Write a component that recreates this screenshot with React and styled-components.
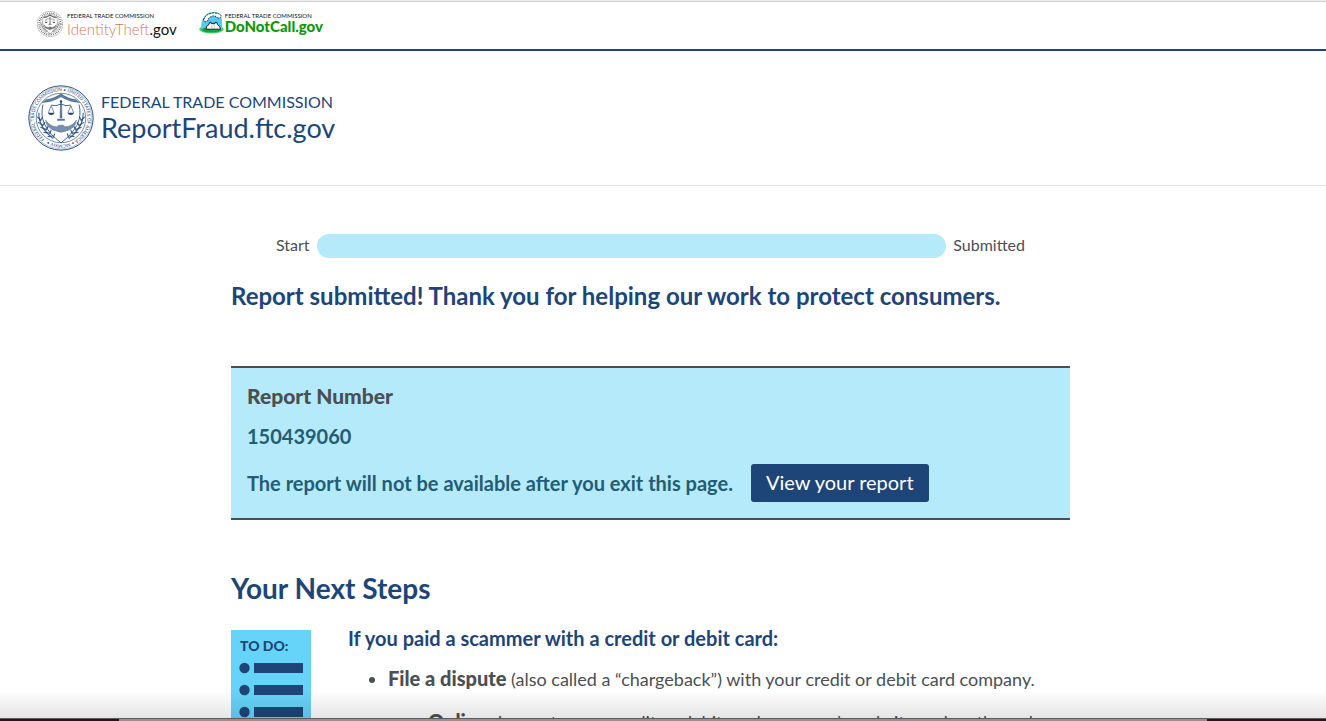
import React from 'react';
import styled, { createGlobalStyle } from 'styled-components';

const NAVY = '#1e4578';
const TEXT = '#4b4f54';
const SKY = '#b4eafa';

const GlobalStyle = createGlobalStyle`
* {
    box-sizing: border-box;
}

body {
    margin: 0;
    background: #fff;
    color: ${TEXT};
    font-family: Lato, "Liberation Sans", sans-serif;
}

h1, h2, h3, p, ul {
    margin: 0;
    padding: 0;
}

a {
    color: inherit;
    text-decoration: none;
}
`

function FtcSeal({size, color, detailed}) {
    return (
        <svg width={size} height={size} viewBox="0 0 64 64" fill="none" stroke={color} aria-hidden="true">
            <circle cx="32" cy="32" r="31.2" strokeWidth="0.9" strokeDasharray={detailed ? 'none' : '5 2'} />
            {detailed ? (
                <>
                    <circle cx="32" cy="32" r="30" strokeWidth="0.3" />
                    <path id="sealRing" d="M16.1 52.3 A25.8 25.8 0 1 1 16.5 52.6" stroke="none" />
                    <text fill={color} stroke="none" fontSize="4.5">
                        <textPath href="#sealRing">FEDERAL TRADE COMMISSION • UNITED STATES OF AMERICA • MCMXIV •</textPath>
                    </text>
                </>
            ) : (
                <circle cx="32" cy="32" r="27" strokeWidth="3" strokeDasharray="1.6 3" />
            )}
            <circle cx="32" cy="32" r="24" strokeWidth="0.6" />
            <path d="M18 14 Q24 14 32 8.5 Q40 14 46 14 L50 17 Q41 17 32 11.5 Q23 17 14 17 Z" fill={color} fillOpacity="0.7" strokeWidth="0.4" />
            <path d="M14.5 19 Q12 29 16 38 Q21 48 32 56 Q43 48 48 38 Q52 29 49.5 19" strokeWidth="0.8" />
            <path d="M31.4 17 h1.2 l0.4 15 h-2 Z M28.5 33 h7 v1.4 h-7 Z" fill={color} fillOpacity="0.7" strokeWidth="0.3" />
            <circle cx="32" cy="16" r="1.2" fill={color} stroke="none" />
            <path d="M22.5 19.5 Q27 21 32 18.5 Q37 21 41.5 19.5" strokeWidth="0.8" />
            <path d="M22.5 20 L19.7 27 M22.5 20 L25.3 27 M41.5 20 L38.7 27 M41.5 20 L44.3 27" strokeWidth="0.6" />
            <path d="M19.3 26.8 h6.4 q-0.8 2.4 -3.2 2.4 t-3.2 -2.4 Z M38.3 26.8 h6.4 q-0.8 2.4 -3.2 2.4 t-3.2 -2.4 Z" fill={color} stroke="none" />
            <path d="M17 34 Q22 41 28.5 40.5 L29.5 39 h5 L35.5 40.5 Q42 41 47 34 Q46 43 36 44.8 Q32 47 28 44.8 Q18 43 17 34 Z" fill={color} fillOpacity="0.6" strokeWidth="0.3" />
            <g strokeWidth={detailed ? 1.1 : 0.8} strokeOpacity="0.85">
                <path d="M10.5 27 Q10 41 24.5 52" />
                <path d="M9 31 l4 4 M9.5 36 l5 3 M12 41 l5.5 2 M15 46 l6 0.6 M19 50 l5 -0.5 M14 31 l-2 4 M16.5 36 l-2.5 4 M19.5 40 l-2 4 M22.5 43.5 l-1.5 4 M26 47 l-1.5 4" />
                <path d="M53.5 27 Q54 41 39.5 52" />
                <path d="M55 31 l-4 4 M54.5 36 l-5 3 M52 41 l-5.5 2 M49 46 l-6 0.6 M45 50 l-5 -0.5 M50 31 l2 4 M47.5 36 l2.5 4 M44.5 40 l2 4 M41.5 43.5 l1.5 4 M38 47 l1.5 4" />
            </g>
        </svg>
    )
}

function PhoneLogo() {
    return (
        <svg width="25" height="23" viewBox="0 0 25 23" aria-hidden="true">
            <ellipse cx="12.5" cy="18.3" rx="12.3" ry="4.2" fill="#54d178" />
            <path d="M2 18 Q2 1 15 1 Q23 1 23 10 V18 Z" fill="#55c9f2" />
            <path d="M2 19 Q6 15.5 12.5 15.5 T23 19 Q20 21.5 12.5 21.5 T2 19 Z" fill="#12a33c" />
            <path d="M4.5 9 Q7 2.5 14 2 Q21 1.6 22.3 5.2 L20.5 7.5 L16.8 6 L16.4 4.9 Q11.5 4.8 9.3 7.6 L9.5 9.2 L6 11 Z" fill="#fff" stroke="#111" strokeWidth="0.8" strokeDasharray="2 0.8" />
            <path d="M7 18.2 Q7 14.5 10 13.5 L10.5 11.4 H12.2 V12.6 H16 V11.4 H17.8 L18.4 13.5 Q21.5 15 21.4 18.2 Z" fill="#fff" stroke="#111" strokeWidth="0.9" />
            <circle cx="14.2" cy="15.6" r="1.7" fill="#fff" stroke="#999" strokeWidth="0.5" />
        </svg>
    )
}

function TodoList() {
    return (
        <svg width="80" height="120" viewBox="0 0 80 120" role="img" aria-label="To do list">
            <rect width="80" height="120" fill="#66d3f9" />
            <text x="9" y="21" fill={NAVY} fontSize="14" fontWeight="900">TO DO:</text>
            {[38, 60, 82, 104].map((y) => (
                <g key={y} fill={NAVY}>
                    <circle cx="13.5" cy={y} r="5.2" />
                    <rect x="23" y={y - 5} width="49" height="10" />
                </g>
            ))}
        </svg>
    )
}

export default function App() {
    return (
        <Page>
            <GlobalStyle />
            <WindowEdge />
            <SiteBar>
                <SiteLink href="#identitytheft" $gap={4}>
                    <FtcSeal size={26} color="#222" />
                    <SiteName>
                        <Agency>FEDERAL TRADE COMMISSION</Agency>
                        <IdentityName>IdentityTheft<span>.gov</span></IdentityName>
                    </SiteName>
                </SiteLink>
                <SiteLink href="#donotcall" $gap={1}>
                    <PhoneLogo />
                    <SiteName>
                        <Agency>FEDERAL TRADE COMMISSION</Agency>
                        <CallName>DoNotCall.gov</CallName>
                    </SiteName>
                </SiteLink>
            </SiteBar>
            <Header>
                <Brand href="#home">
                    <FtcSeal size={66} color={NAVY} detailed />
                    <BrandText>
                        <BrandAgency>FEDERAL TRADE COMMISSION</BrandAgency>
                        <BrandName>ReportFraud.ftc.gov</BrandName>
                    </BrandText>
                </Brand>
            </Header>
            <Main>
                <Progress>
                    <span>Start</span>
                    <Track role="progressbar" aria-label="Report progress" aria-valuenow={100} />
                    <span>Submitted</span>
                </Progress>
                <Title>Report submitted! Thank you for helping our work to protect consumers.</Title>
                <ReportBox>
                    <ReportLabel>Report Number</ReportLabel>
                    <ReportText>150439060</ReportText>
                    <ReportRow>
                        <ReportText>The report will not be available after you exit this page.</ReportText>
                        <ViewButton type="button">View your report</ViewButton>
                    </ReportRow>
                </ReportBox>
                <StepsTitle>Your Next Steps</StepsTitle>
                <Steps>
                    <TodoList />
                    <StepsBody>
                        <StepTitle>If you paid a scammer with a credit or debit card:</StepTitle>
                        <StepList>
                            <li>
                                <strong>File a dispute</strong> (also called a “chargeback”) with your credit or debit card company.
                                <StepSubList>
                                    <li>
                                        <strong>Online:</strong> Log onto your credit or debit card company’s website and go through
                                    </li>
                                </StepSubList>
                            </li>
                        </StepList>
                    </StepsBody>
                </Steps>
            </Main>
            <WindowShadow />
            <Desktop />
        </Page>
    )
}

const Page = styled.div`
position: relative;
display: flex;
flex-direction: column;
height: 100vh;
overflow: hidden;
`

const WindowEdge = styled.div`
flex: none;
height: 2px;
background: #ededed;
border-bottom: 1px solid #d2d2d2;
`

const SiteBar = styled.nav`
flex: none;
display: flex;
gap: 22px;
height: 49px;
padding: 9px 37px 0;
border-bottom: 2px solid ${NAVY};
`

const SiteLink = styled.a`
display: flex;
align-items: flex-start;
gap: ${(props) => props.$gap}px;
`

const SiteName = styled.span`
display: flex;
flex-direction: column;
color: #111;
`

const Agency = styled.span`
font-size: 6px;
line-height: 10px;
`

const IdentityName = styled.span`
color: #d07b5c;
font-size: 15px;
font-weight: 300;
line-height: 16px;

& span {
    color: #111;
    font-weight: 400;
}
`

const CallName = styled.span`
color: #0a980a;
font-size: 15px;
font-weight: 900;
line-height: 10px;
`

const Header = styled.header`
flex: none;
display: flex;
align-items: center;
height: 135px;
padding: 0 28px;
border-bottom: 1px solid #e4e4e4;
`

const Brand = styled.a`
display: flex;
align-items: center;
gap: 7px;
color: ${NAVY};
`

const BrandText = styled.span`
display: flex;
flex-direction: column;
`

const BrandAgency = styled.span`
font-size: 16px;
line-height: 20px;
`

const BrandName = styled.span`
font-size: 27px;
line-height: 32px;
`

const Main = styled.main`
flex: 1;
min-height: 0;
overflow: hidden;
width: 100%;
padding: 48px 256px 0 231px;
`

const Progress = styled.div`
display: flex;
align-items: flex-start;
gap: 7px;
height: 24px;
padding: 0 45px;
font-size: 16px;
line-height: 22px;
`

const Track = styled.div`
flex: 1;
height: 24px;
border-radius: 12px;
background: ${SKY};
`

const Title = styled.h1`
margin-top: 22px;
color: ${NAVY};
font-size: 24px;
font-weight: 700;
line-height: 32px;
white-space: nowrap;
`

const ReportBox = styled.section`
margin-top: 54px;
padding: 16px;
background: ${SKY};
border-top: 2px solid ${TEXT};
border-bottom: 2px solid ${TEXT};
`

const ReportLabel = styled.h2`
margin-bottom: 16px;
font-size: 21px;
font-weight: 900;
line-height: 24px;
`

const ReportText = styled.p`
color: #235d73;
font-size: 20px;
font-weight: 700;
line-height: 24px;
`

const ReportRow = styled.div`
display: flex;
align-items: center;
gap: 18px;
margin-top: 16px;
`

const ViewButton = styled.button`
height: 38px;
padding: 0 15px 2px;
border: 0;
border-radius: 3px;
background: ${NAVY};
color: #fff;
font-family: inherit;
font-size: 20px;
white-space: nowrap;
`

const StepsTitle = styled.h2`
margin-top: 52px;
color: ${NAVY};
font-size: 28px;
font-weight: 700;
line-height: 32px;
`

const Steps = styled.div`
display: flex;
gap: 37px;
margin-top: 26px;

& > svg {
    flex: none;
}
`

const StepsBody = styled.div`
flex: 1;
white-space: nowrap;
`

const StepTitle = styled.h3`
color: ${NAVY};
font-size: 20px;
font-weight: 700;
line-height: 16px;
`

const StepList = styled.ul`
margin-top: 20px;
padding-left: 40px;
font-size: 18px;
line-height: 24px;

& strong {
    font-size: 20px;
    font-weight: 900;
}
`

const StepSubList = styled.ul`
margin-top: 18px;
padding-left: 40px;
`

const WindowShadow = styled.div`
position: absolute;
right: 0;
bottom: 3px;
left: 0;
height: 28px;
background: linear-gradient(rgba(0, 0, 0, 0), rgba(0, 0, 0, 0.1));
pointer-events: none;
`

const Desktop = styled.div`
flex: none;
height: 3px;
border-top: 1px solid #5c5c5c;
background: linear-gradient(to right, #241620 9%, #929292 9%, #929292 91%, #241620 91%);
`
